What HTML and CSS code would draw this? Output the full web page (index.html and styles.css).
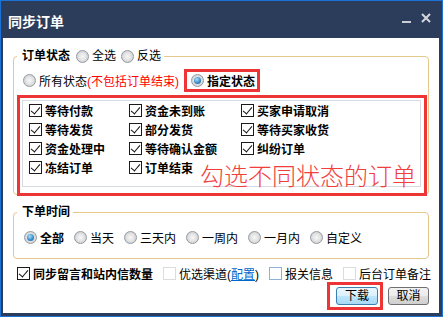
FILE: index.html
```html
<!DOCTYPE html>
<html>
<head>
  <meta charset="utf-8" />
  <title>同步订单</title>
  <link rel="stylesheet" href="styles.css">
</head>
<body>
  <div class="window">
    <div class="titlebar">
      <span class="title">同步订单</span>
      <span class="tb-min"></span>
      <svg class="tb-close" width="10" height="10" viewBox="0 0 10 10">
        <path d="M1 1L9 9M9 1L1 9" stroke="#d3d7de" stroke-width="2" fill="none" />
      </svg>
    </div>

    <div class="content">
      <fieldset class="group">
        <legend class="group-legend">
          <span class="legend-text">订单状态</span>
          <label class="opt"><span class="radio"></span>全选</label>
          <label class="opt opt-gap"><span class="radio"></span>反选</label>
        </legend>

        <div class="status-mode">
          <label class="opt"><span class="radio"></span><span>所有状态<span class="note">(不包括订单结束)</span></span></label>
          <label class="opt opt-bold mark-box"><span class="radio radio-on"></span>指定状态</label>
        </div>

        <div class="mark-area">
          <div class="status-list">
            <label class="chk-item"><span class="check check-on"></span>等待付款</label>
            <label class="chk-item"><span class="check check-on"></span>资金未到账</label>
            <label class="chk-item"><span class="check check-on"></span>买家申请取消</label>
            <label class="chk-item"><span class="check check-on"></span>等待发货</label>
            <label class="chk-item"><span class="check check-on"></span>部分发货</label>
            <label class="chk-item"><span class="check check-on"></span>等待买家收货</label>
            <label class="chk-item"><span class="check check-on"></span>资金处理中</label>
            <label class="chk-item"><span class="check check-on"></span>等待确认金额</label>
            <label class="chk-item"><span class="check check-on"></span>纠纷订单</label>
            <label class="chk-item"><span class="check check-on"></span>冻结订单</label>
            <label class="chk-item"><span class="check check-on"></span>订单结束</label>
            <span class="hint">勾选不同状态的订单</span>
          </div>
        </div>
      </fieldset>

      <fieldset class="group group-time">
        <legend class="group-legend">
          <span class="legend-text">下单时间</span>
        </legend>
        <div class="time-row">
          <label class="opt opt-bold"><span class="radio radio-on"></span>全部</label>
          <label class="opt"><span class="radio"></span>当天</label>
          <label class="opt"><span class="radio"></span>三天内</label>
          <label class="opt"><span class="radio"></span>一周内</label>
          <label class="opt"><span class="radio"></span>一月内</label>
          <label class="opt"><span class="radio"></span>自定义</label>
        </div>
      </fieldset>

      <div class="extra-row">
        <label class="chk-item"><span class="check check-on"></span>同步留言和站内信数量</label>
        <label class="chk-item chk-plain"><span class="check"></span><span>优选渠道(<a class="link" href="#">配置</a>)</span></label>
        <label class="chk-item chk-plain"><span class="check check-hover"></span>报关信息</label>
        <label class="chk-item chk-plain"><span class="check"></span>后台订单备注</label>
      </div>

      <div class="btn-row">
        <div class="mark-btn">
          <button class="btn btn-primary" type="button">下载</button>
        </div>
        <button class="btn" type="button">取消</button>
      </div>
    </div>
  </div>
</body>
</html>
```

FILE: styles.css
```css
* {
  box-sizing: border-box;
}

body {
  margin: 0;
  font-family: "Liberation Sans", "Noto Sans CJK SC", sans-serif;
  font-size: 12px;
  color: #000;
  text-autospace: no-autospace;
}

.window {
  width: 443px;
  height: 317px;
  border: 1px solid #1c73d5;
  background-color: #2c3d5b;
  display: flex;
  flex-direction: column;
}

.titlebar {
  height: 37px;
  flex: none;
  display: flex;
  align-items: flex-start;
  padding: 0 11px 0 7px;
  color: #fff;
}

.title {
  flex: 1;
  margin-top: 11px;
  font-size: 14px;
  font-weight: bold;
  line-height: 20px;
}

.tb-min {
  width: 9px;
  height: 2px;
  margin-top: 20px;
  margin-right: 10px;
  background-color: #c9ced6;
}

.tb-close {
  margin-top: 12px;
}

.content {
  flex: 1;
  margin: 0 3px 3px 2px;
  background-color: #fff;
}

/* group boxes */
.group {
  margin: 9px 10px 0;
  padding: 0;
  min-width: 0;
  border: 1px solid #e5c88c;
  border-radius: 4px;
}

.group-legend {
  display: flex;
  align-items: center;
  height: 18px;
  margin-left: 3px;
  padding: 0 3px 0 5px;
  line-height: 18px;
}

.legend-text {
  font-weight: bold;
  margin-right: 6px;
}

.group-time {
  margin-top: 8px;
}

.group-time .legend-text {
  margin-right: 0;
}

.opt {
  display: inline-flex;
  align-items: center;
  gap: 3px;
  height: 18px;
  white-space: nowrap;
}

.opt-gap {
  margin-left: 5px;
}

.opt-bold {
  font-weight: bold;
}

.note {
  color: #ff0000;
}

.status-mode {
  display: flex;
  align-items: center;
  height: 23px;
  margin-top: 4px;
  padding-left: 9px;
}

.mark-box {
  height: 23px;
  margin-left: 5px;
  padding: 0 2px 0 4px;
  border: 3px solid #ee3535;
}

.mark-area {
  position: relative;
  margin: 3px 1px -2px 3px;
  padding: 2px 3px 6px 2px;
  border: 3px solid #ee3535;
}

.status-list {
  position: relative;
  height: 87px;
  padding-left: 6px;
  border: 1px solid #d5dae3;
  display: grid;
  grid-template-columns: 100px 112px 1fr;
  grid-auto-rows: 19px;
  align-content: start;
}

.hint {
  position: absolute;
  left: 177px;
  top: 64px;
  font-size: 24px;
  line-height: 24px;
  font-weight: 300;
  color: #f23d3d;
  white-space: nowrap;
}

/* radios and checks */
.radio {
  position: relative;
  flex: none;
  width: 13px;
  height: 13px;
  border: 1px solid #929aa4;
  border-radius: 50%;
  background: radial-gradient(circle, #f7f7f7 0, #e4e4e4 45%, #c4c4c4 100%);
}

.radio-on::after {
  content: "";
  position: absolute;
  left: 2px;
  top: 2px;
  width: 7px;
  height: 7px;
  border-radius: 50%;
  background: radial-gradient(circle at 40% 35%, #aee0fa 0, #3a8fcc 55%, #17508a 100%);
}

.chk-item {
  display: flex;
  align-items: center;
  gap: 3px;
  font-weight: bold;
  white-space: nowrap;
}

.chk-plain {
  font-weight: normal;
}

.check {
  position: relative;
  flex: none;
  width: 13px;
  height: 13px;
  border: 1px solid #dcdcdc;
  background-color: #fff;
}

.check-on {
  border-color: #1a1a1a;
}

.check-on::after {
  content: "";
  position: absolute;
  left: 3px;
  top: 0;
  width: 4px;
  height: 8px;
  border: solid #111;
  border-width: 0 1.5px 1.5px 0;
  transform: rotate(40deg);
}

.check-hover {
  border-color: #8fb0d8;
}

.link {
  color: #0066cc;
  text-decoration: underline;
}

.time-row {
  display: flex;
  align-items: center;
  gap: 10px;
  height: 20px;
  margin: 6px 0 11px 10px;
}

/* bottom rows */
.extra-row {
  display: flex;
  align-items: center;
  gap: 10px;
  height: 18px;
  margin: 5px 0 0 14px;
}

.btn-row {
  display: flex;
  justify-content: flex-end;
  align-items: center;
  gap: 5px;
  height: 28px;
  padding-right: 10px;
}

.mark-btn {
  padding: 2px 2px 2px 6px;
  border: 3px solid #ee3535;
}

.btn {
  width: 41px;
  height: 18px;
  padding: 0;
  border: 1px solid #707070;
  border-radius: 3px;
  font-family: "Liberation Sans", "Noto Sans CJK SC", sans-serif;
  font-size: 12px;
  line-height: 16px;
  color: #000;
  background: linear-gradient(#f2f2f2, #ebebeb 50%, #dddddd 50%, #cfcfcf);
}

.btn-primary {
  width: 42px;
  border-color: #3c7fb1;
  background: linear-gradient(#eaf6fd, #d9f0fc 50%, #bee6fd 50%, #a7d9f5);
}
```
